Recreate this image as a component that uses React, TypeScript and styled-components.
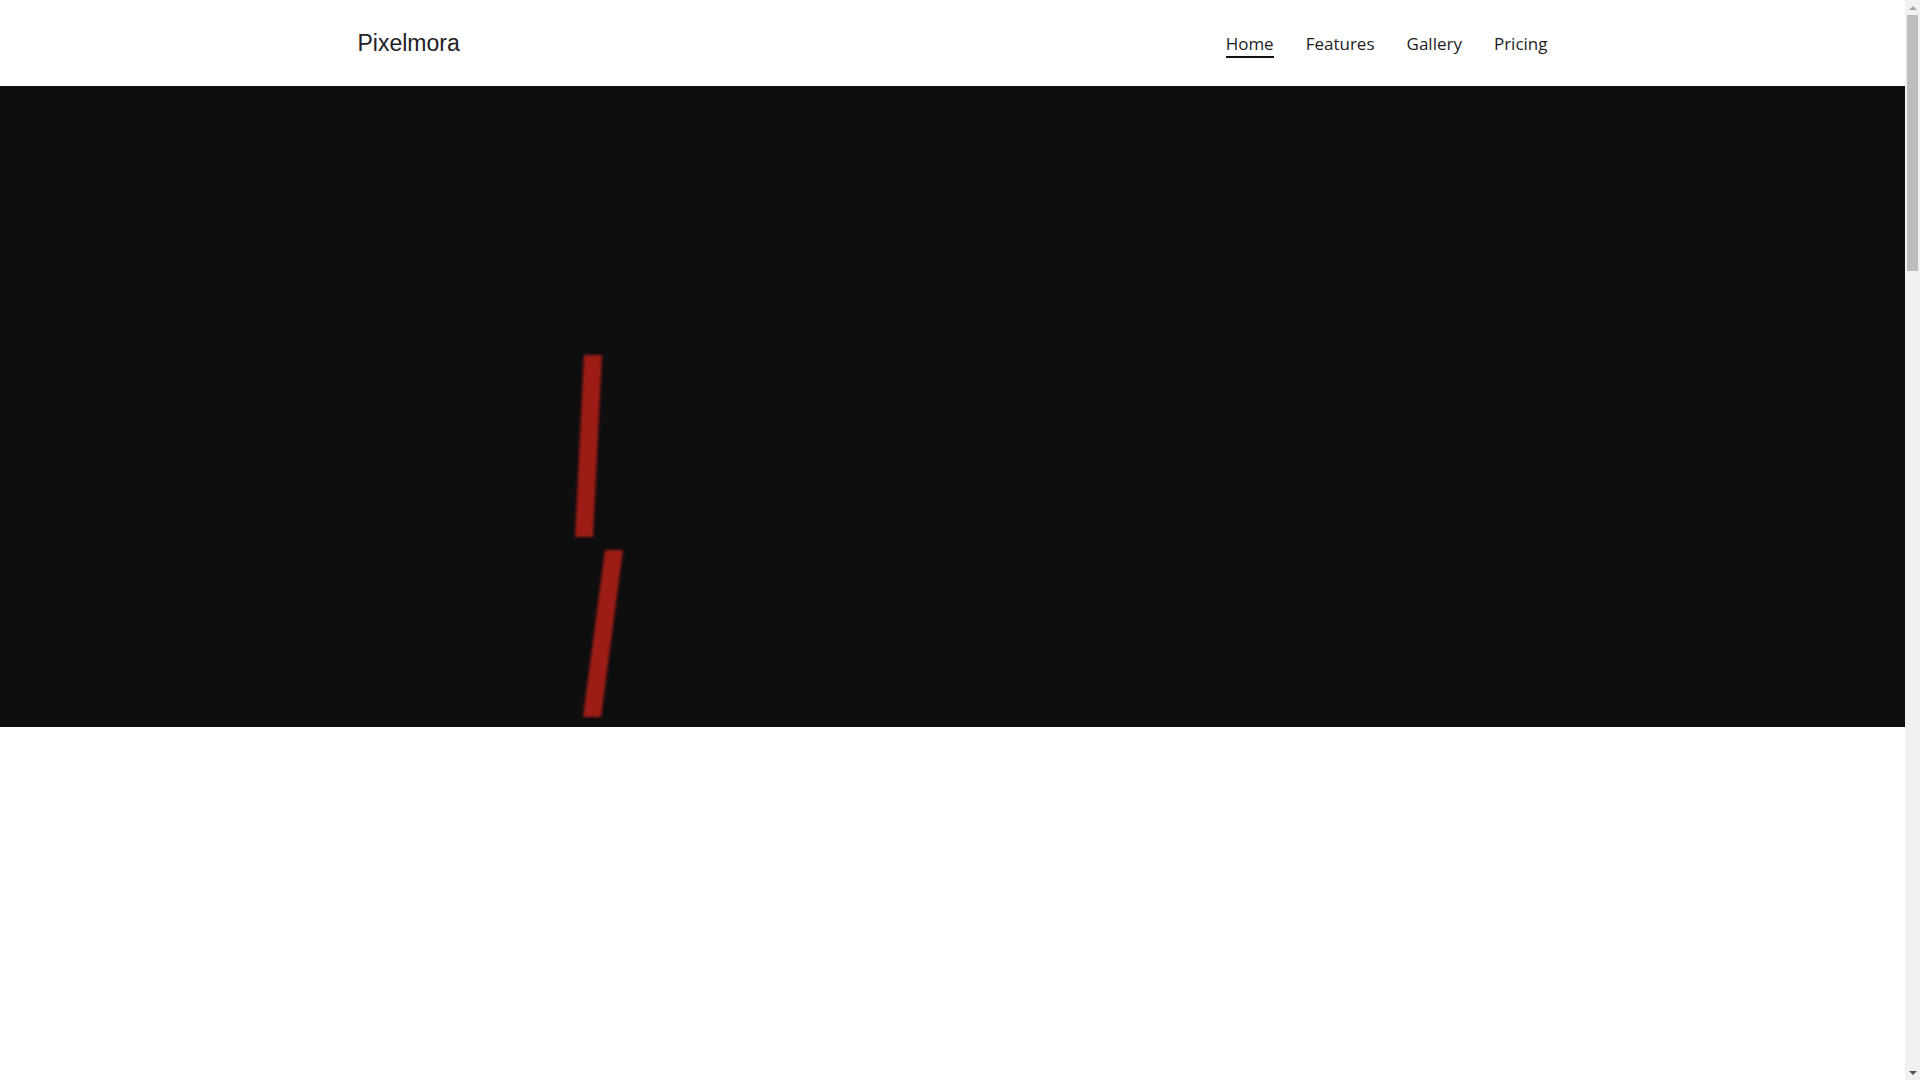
import * as React from 'react';
import styled, { createGlobalStyle } from 'styled-components';

const GlobalStyle = createGlobalStyle`
    html, body {
        margin: 0;
        padding: 0;
        background: #ffffff;
    }
    * {
        box-sizing: border-box;
    }
`;

const Page = styled.div`
    min-height: 4420px;
    margin-right: 15px;
    background: #ffffff;
`;

const Header = styled.header`
    height: 86px;
    background: #ffffff;
`;

const HeaderInner = styled.div`
    max-width: 1200px;
    height: 100%;
    margin: 0 auto;
    padding: 0 5px;
    display: flex;
    align-items: center;
    justify-content: space-between;
`;

const Logo = styled.a`
    font-family: 'Liberation Sans', Arial, sans-serif;
    font-size: 23px;
    color: #1d2125;
    text-decoration: none;
    margin-top: 1px;
`;

const NavList = styled.ul`
    display: flex;
    gap: 32px;
    margin: 4px 0 0;
    padding: 0;
    list-style: none;
`;

type NavLinkProps = {
    $active?: boolean
};

const NavLink = styled.a<NavLinkProps>`
    display: block;
    font-family: 'Open Sans', 'Noto Sans', sans-serif;
    font-size: 17px;
    color: #1d1d1f;
    text-decoration: none;
    line-height: 24px;
    border-bottom: 2px solid ${props => props.$active ? '#111111' : 'transparent'};
`;

const Hero = styled.section`
    position: relative;
    height: 641px;
    background: #0e0e0e;
    overflow: hidden;
`;

const Streaks = styled.svg`
    position: absolute;
    left: 0;
    top: 0;
    width: 100%;
    height: 100%;
`;

const Section = styled.section`
    height: 3690px;
`;

// stand-in for the classic browser scrollbar seen in the screenshot
const ScrollTrack = styled.div`
    position: fixed;
    top: 0;
    right: 0;
    width: 15px;
    height: 100vh;
    background: #f1f1f1;
    display: flex;
    flex-direction: column;
    align-items: center;
`;

type ArrowProps = {
    $down?: boolean
};

const ScrollArrow = styled.div<ArrowProps>`
    height: 15px;
    width: 15px;
    display: flex;
    align-items: center;
    justify-content: center;
    &::before {
        content: '';
        border-left: 4px solid transparent;
        border-right: 4px solid transparent;
        ${props => props.$down
            ? 'border-top: 4px solid #505050;'
            : 'border-bottom: 4px solid #a3a3a3;'}
    }
`;

const ScrollBody = styled.div`
    flex: 1;
    width: 100%;
    padding: 0 2px;
`;

const ScrollThumb = styled.div`
    height: 256px;
    background: #bdbdbd;
`;

const links = ['Home', 'Features', 'Gallery', 'Pricing'];

const App: React.FC = () => {
    return (
        <Page>
            <GlobalStyle />
            <Header>
                <HeaderInner>
                    <Logo href="#">Pixelmora</Logo>
                    <nav>
                        <NavList>
                            {links.map((label, i) => (
                                <li key={label}>
                                    <NavLink href="#" $active={i === 0}>{label}</NavLink>
                                </li>
                            ))}
                        </NavList>
                    </nav>
                </HeaderInner>
            </Header>
            <Hero>
                {/* frame of the background video: two red streaks */}
                <Streaks viewBox="0 0 1905 641" preserveAspectRatio="xMinYMin slice">
                    <defs>
                        <filter id="soft" x="-30%" y="-5%" width="160%" height="110%">
                            <feGaussianBlur stdDeviation="1.5" />
                        </filter>
                    </defs>
                    <g fill="#9e1b13" filter="url(#soft)">
                        <polygon points="584,269 602,269 593,451 575,451" />
                        <polygon points="605,464 623,464 601,631 583,631" />
                    </g>
                </Streaks>
            </Hero>
            <Section />
            <ScrollTrack>
                <ScrollArrow />
                <ScrollBody>
                    <ScrollThumb />
                </ScrollBody>
                <ScrollArrow $down />
            </ScrollTrack>
        </Page>
    );
};

export default App;
